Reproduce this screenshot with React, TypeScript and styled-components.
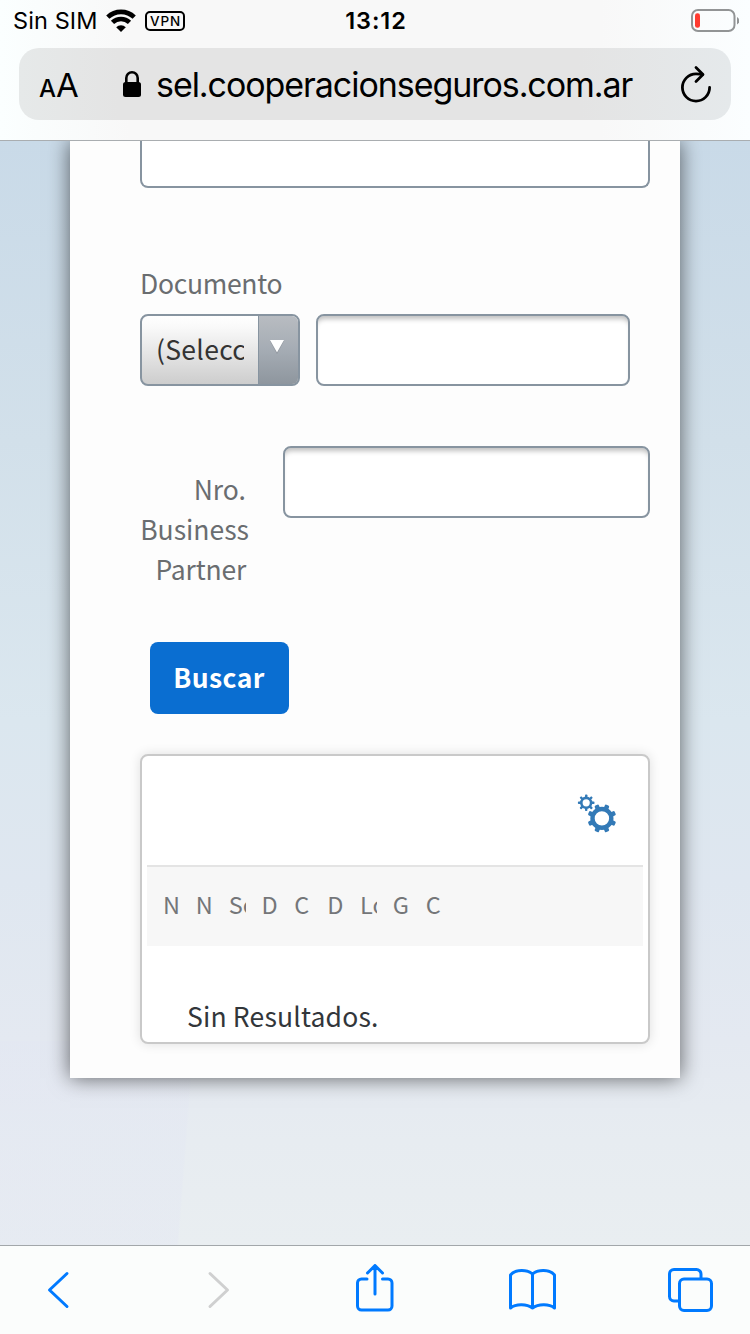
import React from 'react';
import styled, { createGlobalStyle } from 'styled-components';

const GlobalStyle = createGlobalStyle`
  * { box-sizing: border-box; }
  body { margin: 0; }
`;

const sys = `Inter, "Liberation Sans", sans-serif`;
const body = `"Noto Sans CJK SC", "Noto Sans", sans-serif`;

const Screen = styled.div`
  width: 750px;
  height: 1334px;
  display: flex;
  flex-direction: column;
  overflow: hidden;
  font-family: ${body};
`;

const Header = styled.header`
  height: 141px;
  flex: none;
  border-bottom: 1px solid #a9adb0;
  background: linear-gradient(90deg, #fbffff 0, #f8f8f8 130px, #f8f8f8 600px, #fbfeff 750px);
  font-family: ${sys};
  color: #000;
  position: relative;
  z-index: 1;
`;

const StatusBar = styled.div`
  height: 48px;
  display: grid;
  grid-template-columns: 1fr auto 1fr;
  padding: 0 11px 8px 13px;
  align-items: center;
`;

const StatusLeft = styled.div`
  display: flex;
  align-items: center;
`;

const Carrier = styled.span`
  font-size: 23.5px;
  line-height: 40px;
  padding-top: 1px;
  width: 93px;
  letter-spacing: 0.1px;
  white-space: nowrap;
`;

const Vpn = styled.span`
  width: 40px;
  height: 20px;
  margin-left: 9px;
  border: 2px solid #000;
  border-radius: 5px;
  font-size: 13.5px;
  font-weight: 500;
  line-height: 16px;
  letter-spacing: 0.8px;
  text-align: center;
  padding-left: 1px;
`;

const Clock = styled.span`
  font-size: 23.5px;
  font-weight: 600;
  line-height: 40px;
  padding-top: 1px;
  letter-spacing: 0.9px;
`;

const StatusRight = styled.div`
  display: flex;
  justify-content: flex-end;
`;

const AddressBar = styled.div`
  height: 72px;
  margin: 0 19px;
  padding: 0 18px 0 20px;
  border-radius: 20px;
  background: linear-gradient(90deg, #e6e9e9 0, #e4e4e4 100px, #e4e4e4 560px, #e5e9eb 100%);
  display: flex;
  align-items: center;
`;

const TextSize = styled.span`
  width: 83px;
  font-size: 33px;
  line-height: 40px;
  padding-top: 5px;
  white-space: nowrap;
  small { font-size: 24px; font-weight: 500; }
`;

const Url = styled.span`
  flex: 1;
  margin-left: 14px;
  font-size: 34px;
  line-height: 72px;
  letter-spacing: -1.06px;
  padding-top: 1px;
  white-space: nowrap;
`;

const Page = styled.main`
  height: 1104px;
  flex: none;
  overflow: hidden;
  padding: 0 70px;
  background:
    linear-gradient(94.4deg, rgba(226, 230, 243, 0.4) 0, rgba(226, 230, 243, 0.35) 192px, transparent 194px) 0 900px / 750px 204px no-repeat,
    linear-gradient(180deg, #c9dae8 0, #d2e0ea 300px, #dbe7ef 580px, #dfe7f0 740px, #e4e9f1 900px, #e7ecf1 1000px, #e9eef1 1104px);
`;

const Card = styled.section`
  height: 937px;
  padding: 0 30px 0 70px;
  background: #fdfdfd;
  box-shadow: 0 0 20px rgba(0, 0, 0, 0.6);
`;

const Field = styled.div<{ $w: number; $h?: number }>`
  width: ${p => p.$w}px;
  height: ${p => p.$h ?? 72}px;
  flex: none;
  border: 2px solid #8794a0;
  border-radius: 8px;
  background: #fff;
  box-shadow: inset 0 6px 5px -3px rgba(0, 0, 0, 0.25);
`;

const CutField = styled(Field)`
  border-top: 0;
  border-radius: 0 0 8px 8px;
  box-shadow: none;
`;

const Label = styled.div`
  margin-top: 75px;
  height: 51px;
  font-size: 26.5px;
  line-height: 40px;
  color: #6a6d70;
  letter-spacing: -0.3px;
`;

const DocumentRow = styled.div`
  display: flex;
  gap: 16px;
`;

const Select = styled.div`
  width: 160px;
  height: 72px;
  border: 2px solid #8794a0;
  border-radius: 8px;
  display: flex;
  overflow: hidden;
  background: linear-gradient(180deg, #fff 0, #fafafa 15%, #cdcdcd 100%);
`;

const SelectText = styled.div`
  width: 88px;
  margin: 0 14px;
  overflow: hidden;
  white-space: nowrap;
  color: #333;
  font-size: 26.5px;
  line-height: 65px;
  letter-spacing: 0.3px;
`;

const SelectArrow = styled.div`
  flex: 1;
  border-left: 1px solid #8794a0;
  background: linear-gradient(180deg, #b8bcc1 0, #a5acb4 50%, #8e969e 100%);
  display: flex;
  justify-content: center;
  padding: 24px 3px 0 0;
`;

const PartnerRow = styled.div`
  display: flex;
  justify-content: space-between;
  margin-top: 60px;
`;

const PartnerLabel = styled.div`
  width: 110px;
  padding-top: 23px;
  text-align: right;
  font-size: 26.5px;
  line-height: 40px;
  color: #6a6d70;
  div { white-space: nowrap; }
`;

const PartnerLine = styled.div<{ $end: number; $ls?: number }>`
  padding-right: ${p => p.$end}px;
  letter-spacing: ${p => p.$ls ?? 0}px;
`;

const SearchButton = styled.button`
  display: block;
  width: 139px;
  height: 72px;
  margin: 53px 0 0 10px;
  padding: 0 1px 2px 0;
  border: 0;
  border-radius: 8px;
  background: #0a6ed1;
  color: #fff;
  font-family: ${body};
  font-size: 26.5px;
  font-weight: 700;
  letter-spacing: 0.4px;
  line-height: 70px;
`;

const Results = styled.div`
  width: 510px;
  height: 290px;
  margin-top: 40px;
  padding: 0 5px;
  border: 2px solid #c9c9c9;
  border-radius: 8px;
  background: #fff;
  box-shadow: 0 0 12px rgba(0, 0, 0, 0.12);
`;

const ResultsTools = styled.div`
  height: 109px;
  display: flex;
  justify-content: flex-end;
  padding: 36px 27px 0 0;
`;

const HeadRow = styled.div`
  height: 81px;
  border-top: 2px solid #e4e4e4;
  background: #f7f7f7;
  display: flex;
`;

const HeadCell = styled.div`
  width: 32.83px;
  padding-left: 16px;
  font-size: 23.5px;
  line-height: 75px;
  color: #747679;
  span {
    display: block;
    width: 17px;
    overflow: hidden;
    white-space: nowrap;
  }
`;

const Empty = styled.div`
  padding: 50px 0 0 40px;
  font-size: 26.5px;
  line-height: 40px;
  letter-spacing: 0.17px;
  color: #32363a;
  white-space: nowrap;
`;

const Toolbar = styled.nav`
  height: 89px;
  flex: none;
  border-top: 1px solid #a2a7aa;
  background: #fbfdfc;
  display: flex;
  align-items: center;
  color: #007aff;
`;

const ToolButton = styled.div<{ $before: number; $muted?: boolean }>`
  display: flex;
  flex: none;
  margin-left: ${p => p.$before}px;
  color: ${p => (p.$muted ? '#cfd0d0' : 'inherit')};
`;

function Wifi() {
  return (
    <svg width="30" height="24" viewBox="0 0 30 24" fill="none" stroke="#000" strokeWidth="4.6">
      <path d="M1.8 8.2A19 19 0 0 1 28.2 8.2" />
      <path d="M6.5 13.4A12.2 12.2 0 0 1 23.5 13.4" />
      <path d="M15 23L10.2 18.2A6.8 6.8 0 0 1 19.8 18.2Z" fill="#000" stroke="none" />
    </svg>
  );
}

function Battery() {
  return (
    <svg width="48" height="24" viewBox="0 0 48 24">
      <rect x="1" y="1" width="42.5" height="21" rx="6" fill="none" stroke="#929495" strokeWidth="2" />
      <rect x="4" y="4.3" width="5" height="14.4" rx="2.3" fill="#ff3b30" />
      <path d="M46 8a4.3 4.3 0 0 1 0 7.5z" fill="#929495" />
    </svg>
  );
}

function Lock() {
  return (
    <svg width="20" height="28" viewBox="0 0 20 28">
      <rect x="1" y="12" width="18" height="15" rx="2.5" />
      <path d="M4.300 13V8a5.700 5.800 0 0 1 11.400 0v5" fill="none" stroke="#000" strokeWidth="2.6" />
    </svg>
  );
}

function Reload() {
  return (
    <svg width="34" height="40" viewBox="0 -1 34 40" fill="none" stroke="#000" strokeWidth="2.8" strokeLinecap="round" strokeLinejoin="round">
      <path d="M30.6 22.5A13.6 13.6 0 1 1 17 8.9C19.5 8.9 21.6 8.9 23.5 9.6" />
      <path d="M17 2.5L24 9.5L17 16.5" />
    </svg>
  );
}

const teeth = [0, 45, 90, 135, 180, 225, 270, 315];

function Gears() {
  return (
    <svg width="40" height="42" viewBox="576 792 40 42" fill="#337ab7" stroke="none">
      <circle cx="586.2" cy="802.8" r="4.9" fill="none" stroke="#337ab7" strokeWidth="2.6" />
      {teeth.map(a => (
        <rect key={a} x="585" y="794.5" width="2.4" height="3.6" rx="0.8" transform={`rotate(${a} 586.2 802.8)`} />
      ))}
      <circle cx="601.9" cy="818.4" r="9.4" fill="none" stroke="#337ab7" strokeWidth="4.4" />
      {teeth.map(a => (
        <rect key={a} x="599.6" y="804" width="4.6" height="5" rx="1.3" transform={`rotate(${a + 22.5} 601.9 818.4)`} />
      ))}
    </svg>
  );
}

const columns = ['N', 'N', 'So', 'D', 'C', 'D', 'Lo', 'G', 'C'];

const line = { fill: 'none', stroke: 'currentColor', strokeWidth: 3, strokeLinecap: 'round', strokeLinejoin: 'round' } as const;

export default function App() {
  return (
    <Screen>
      <GlobalStyle />
      <Header>
        <StatusBar>
          <StatusLeft>
            <Carrier>Sin SIM</Carrier>
            <Wifi />
            <Vpn>VPN</Vpn>
          </StatusLeft>
          <Clock>13:12</Clock>
          <StatusRight><Battery /></StatusRight>
        </StatusBar>
        <AddressBar>
          <TextSize><small>A</small>A</TextSize>
          <Lock />
          <Url>sel.cooperacionseguros.com.ar</Url>
          <Reload />
        </AddressBar>
      </Header>

      <Page>
        <Card>
          <CutField $w={510} $h={47} />
          <Label>Documento</Label>
          <DocumentRow>
            <Select>
              <SelectText>(Selecc</SelectText>
              <SelectArrow>
                <svg width="14" height="14" viewBox="0 0 14 14">
                  <path d="M0 1H14L7 14Z" fill="#7f868c" opacity=".6" />
                  <path d="M0 0H14L7 12.5Z" fill="#fff" />
                </svg>
              </SelectArrow>
            </Select>
            <Field $w={314} />
          </DocumentRow>
          <PartnerRow>
            <PartnerLabel>
              <PartnerLine $end={4}>Nro.</PartnerLine>
              <PartnerLine $end={1}>Business</PartnerLine>
              <PartnerLine $end={4} $ls={-0.2}>Partner</PartnerLine>
            </PartnerLabel>
            <Field $w={367} />
          </PartnerRow>
          <SearchButton>Buscar</SearchButton>
          <Results>
            <ResultsTools><Gears /></ResultsTools>
            <HeadRow>
              {columns.map((c, i) => <HeadCell key={i}><span>{c}</span></HeadCell>)}
            </HeadRow>
            <Empty>Sin Resultados.</Empty>
          </Results>
        </Card>
      </Page>

      <Toolbar>
        <ToolButton $before={46}>
          <svg width="26" height="48" viewBox="46 1266 26 48" {...line}><path d="M67 1273.5L49.5 1290L67 1306.5" /></svg>
        </ToolButton>
        <ToolButton $before={134} $muted>
          <svg width="26" height="48" viewBox="206 1266 26 48" {...line}><path d="M210 1273.5L227.5 1290L210 1306.5" /></svg>
        </ToolButton>
        <ToolButton $before={122}>
          <svg width="42" height="52" viewBox="354 1264 42 52" {...line}>
            <path d="M367 1279H361.500a4 4 0 0 0-4 4V1306a4 4 0 0 0 4 4H388a4 4 0 0 0 4-4V1283a4 4 0 0 0-4-4H382.500" />
            <path d="M375 1294V1266M367.500 1273L375 1265.500L382.500 1273" />
          </svg>
        </ToolButton>
        <ToolButton $before={110}>
          <svg width="52" height="48" viewBox="506 1266 52 48" {...line}>
            <path d="M532.500 1308V1274C528 1270 516 1268.500 510.500 1275V1308C516 1303.500 527 1304 532.500 1308C538 1304 549 1303.500 554.500 1308V1275C549 1268.500 537 1270 532.500 1274" />
          </svg>
        </ToolButton>
        <ToolButton $before={108}>
          <svg width="48" height="48" viewBox="666 1266 48 48" {...line}>
            <path d="M679 1301H674a4.500 4.500 0 0 1-4.500-4.500V1274a4.500 4.500 0 0 1 4.500-4.500H696.500a4.500 4.500 0 0 1 4.500 4.500V1278" />
            <rect x="679.500" y="1279" width="32" height="31.500" rx="4.500" />
          </svg>
        </ToolButton>
      </Toolbar>
    </Screen>
  );
}
